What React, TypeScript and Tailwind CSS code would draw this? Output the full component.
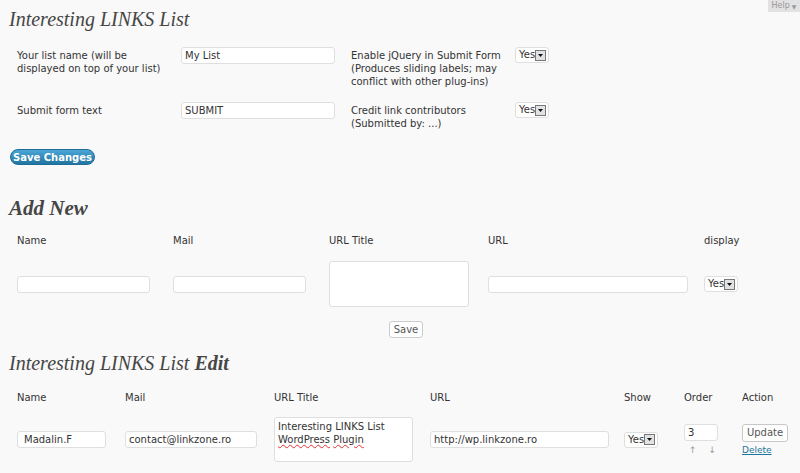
import React from "react";

const sans = "font-['DejaVu_Sans',Verdana,sans-serif]";

function Select({ className = "" }: { className?: string }) {
  return (
    <div
      className={`flex h-[16px] w-[34px] items-center justify-between rounded-[3px] border border-[#dfdfdf] bg-white pl-[3px] pr-[2px] ${className}`}
    >
      <span className="text-[10px] leading-none text-[#333]">Yes</span>
      <span className="flex h-[11px] w-[11px] items-center justify-center border border-[#777] bg-[#e2e2e2]">
        <svg width="5" height="3" viewBox="0 0 5 3">
          <path d="M0 0h5L2.5 3z" fill="#111" />
        </svg>
      </span>
    </div>
  );
}

function Input({ w, value = "", className = "" }: { w: string; value?: string; className?: string }) {
  return (
    <div
      className={`flex h-[17px] items-center rounded-[3px] border border-[#dfdfdf] bg-white px-[3px] text-[10px] text-[#333] ${w} ${className}`}
    >
      {value}
    </div>
  );
}

export default function App() {
  return (
    <div className={`relative h-[473px] w-[800px] overflow-hidden bg-[#f9f9f9] ${sans} text-[#333]`}>
      <div className="absolute right-0 top-0 flex h-[12px] w-[32px] items-center justify-center gap-[2px] bg-[#e2e2e2] text-[8px] text-[#999]">
        Help <span className="text-[6px]">▼</span>
      </div>

      <h1 className="ml-[9px] pt-[6px] font-['Liberation_Serif',Georgia,serif] text-[20px] italic leading-[26px] text-[#464646]">
        Interesting LINKS List
      </h1>

      {/* settings */}
      <div className="ml-[17px] mt-[15px] grid grid-cols-[164px_170px_164px_40px] gap-y-[14px] text-[10px] leading-[13px]">
        <div className="pt-[2px]">
          Your list name (will be
          <br />
          displayed on top of your list)
        </div>
        <div>
          <Input w="w-[154px]" value="My List" />
        </div>
        <div className="pt-[2px]">
          Enable jQuery in Submit Form
          <br />
          (Produces sliding labels; may
          <br />
          conflict with other plug-ins)
        </div>
        <div>
          <Select />
        </div>

        <div className="pt-[2px]">Submit form text</div>
        <div>
          <Input w="w-[154px]" value="SUBMIT" />
        </div>
        <div className="pt-[2px]">
          Credit link contributors
          <br />
          (Submitted by: ...)
        </div>
        <div>
          <Select />
        </div>
      </div>

      <div className="ml-[10px] mt-[19px] flex h-[16px] w-[85px] items-center justify-center rounded-full border border-[#1e6d97] bg-gradient-to-b from-[#4aa6d6] to-[#2175a2] text-[10px] font-bold text-white">
        Save Changes
      </div>

      <h2 className="ml-[9px] mt-[30px] font-['Liberation_Serif',Georgia,serif] text-[21px] font-bold italic leading-[26px] text-[#464646]">
        Add New
      </h2>

      <div className="ml-[17px] mt-[13px] grid grid-cols-[156px_156px_159px_216px_80px] items-center text-[10px]">
        <div className="leading-[13px]">Name</div>
        <div className="leading-[13px]">Mail</div>
        <div className="leading-[13px]">URL Title</div>
        <div className="leading-[13px]">URL</div>
        <div className="leading-[13px]">display</div>
      </div>
      <div className="ml-[17px] mt-[14px] grid grid-cols-[156px_156px_159px_216px_80px] items-center text-[10px]">
        <Input w="w-[133px]" />
        <Input w="w-[133px]" />
        <div className="h-[46px] w-[140px] rounded-[3px] border border-[#dfdfdf] bg-white" />
        <Input w="w-[200px]" />
        <Select />
      </div>
      <div className="ml-[389px] mt-[14px] flex h-[17px] w-[34px] items-center justify-center rounded-[3px] border border-[#ccc] bg-white text-[10px] text-[#555]">
        Save
      </div>

      <h2 className="ml-[9px] mt-[12px] font-['Liberation_Serif',Georgia,serif] text-[20px] italic leading-[26px] text-[#464646]">
        Interesting LINKS List <b>Edit</b>
      </h2>

      <div className="ml-[17px] mt-[15px] grid grid-cols-[108px_149px_156px_194px_60px_58px_56px] text-[10px] leading-[13px]">
        <div>Name</div>
        <div>Mail</div>
        <div>URL Title</div>
        <div>URL</div>
        <div>Show</div>
        <div>Order</div>
        <div>Action</div>
      </div>
      <div className="ml-[17px] mt-[13px] grid grid-cols-[108px_149px_156px_194px_60px_58px_56px] items-center text-[10px]">
        <Input w="w-[89px]" value="Madalin.F" className="pl-[6px]" />
        <Input w="w-[132px]" value="contact@linkzone.ro" />
        <div className="h-[45px] w-[139px] rounded-[3px] border border-[#dfdfdf] bg-white px-[3px] pt-[2px] text-[10px] leading-[13px]">
          Interesting LINKS List
          <br />
          <span className="underline decoration-[#e03030] decoration-wavy decoration-[1px]">WordPress</span>{" "}
          <span className="underline decoration-[#e03030] decoration-wavy decoration-[1px]">Plugin</span>
        </div>
        <Input w="w-[179px]" value="http://wp.linkzone.ro" />
        <Select />
        <div className="flex flex-col">
          <Input w="w-[34px]" value="3" />
          <div className="mt-[3px] flex gap-[12px] pl-[5px] text-[9px] leading-[12px] text-[#999]">
            <span>↑</span>
            <span>↓</span>
          </div>
        </div>
        <div className="flex flex-col">
          <div className="flex h-[18px] w-[46px] items-center justify-center rounded-[3px] border border-[#c8c8c8] bg-white text-[10px] text-[#555]">
            Update
          </div>
          <div className="mt-[2px] text-[9px] leading-[12px] text-[#21759b] underline">Delete</div>
        </div>
      </div>
    </div>
  );
}
